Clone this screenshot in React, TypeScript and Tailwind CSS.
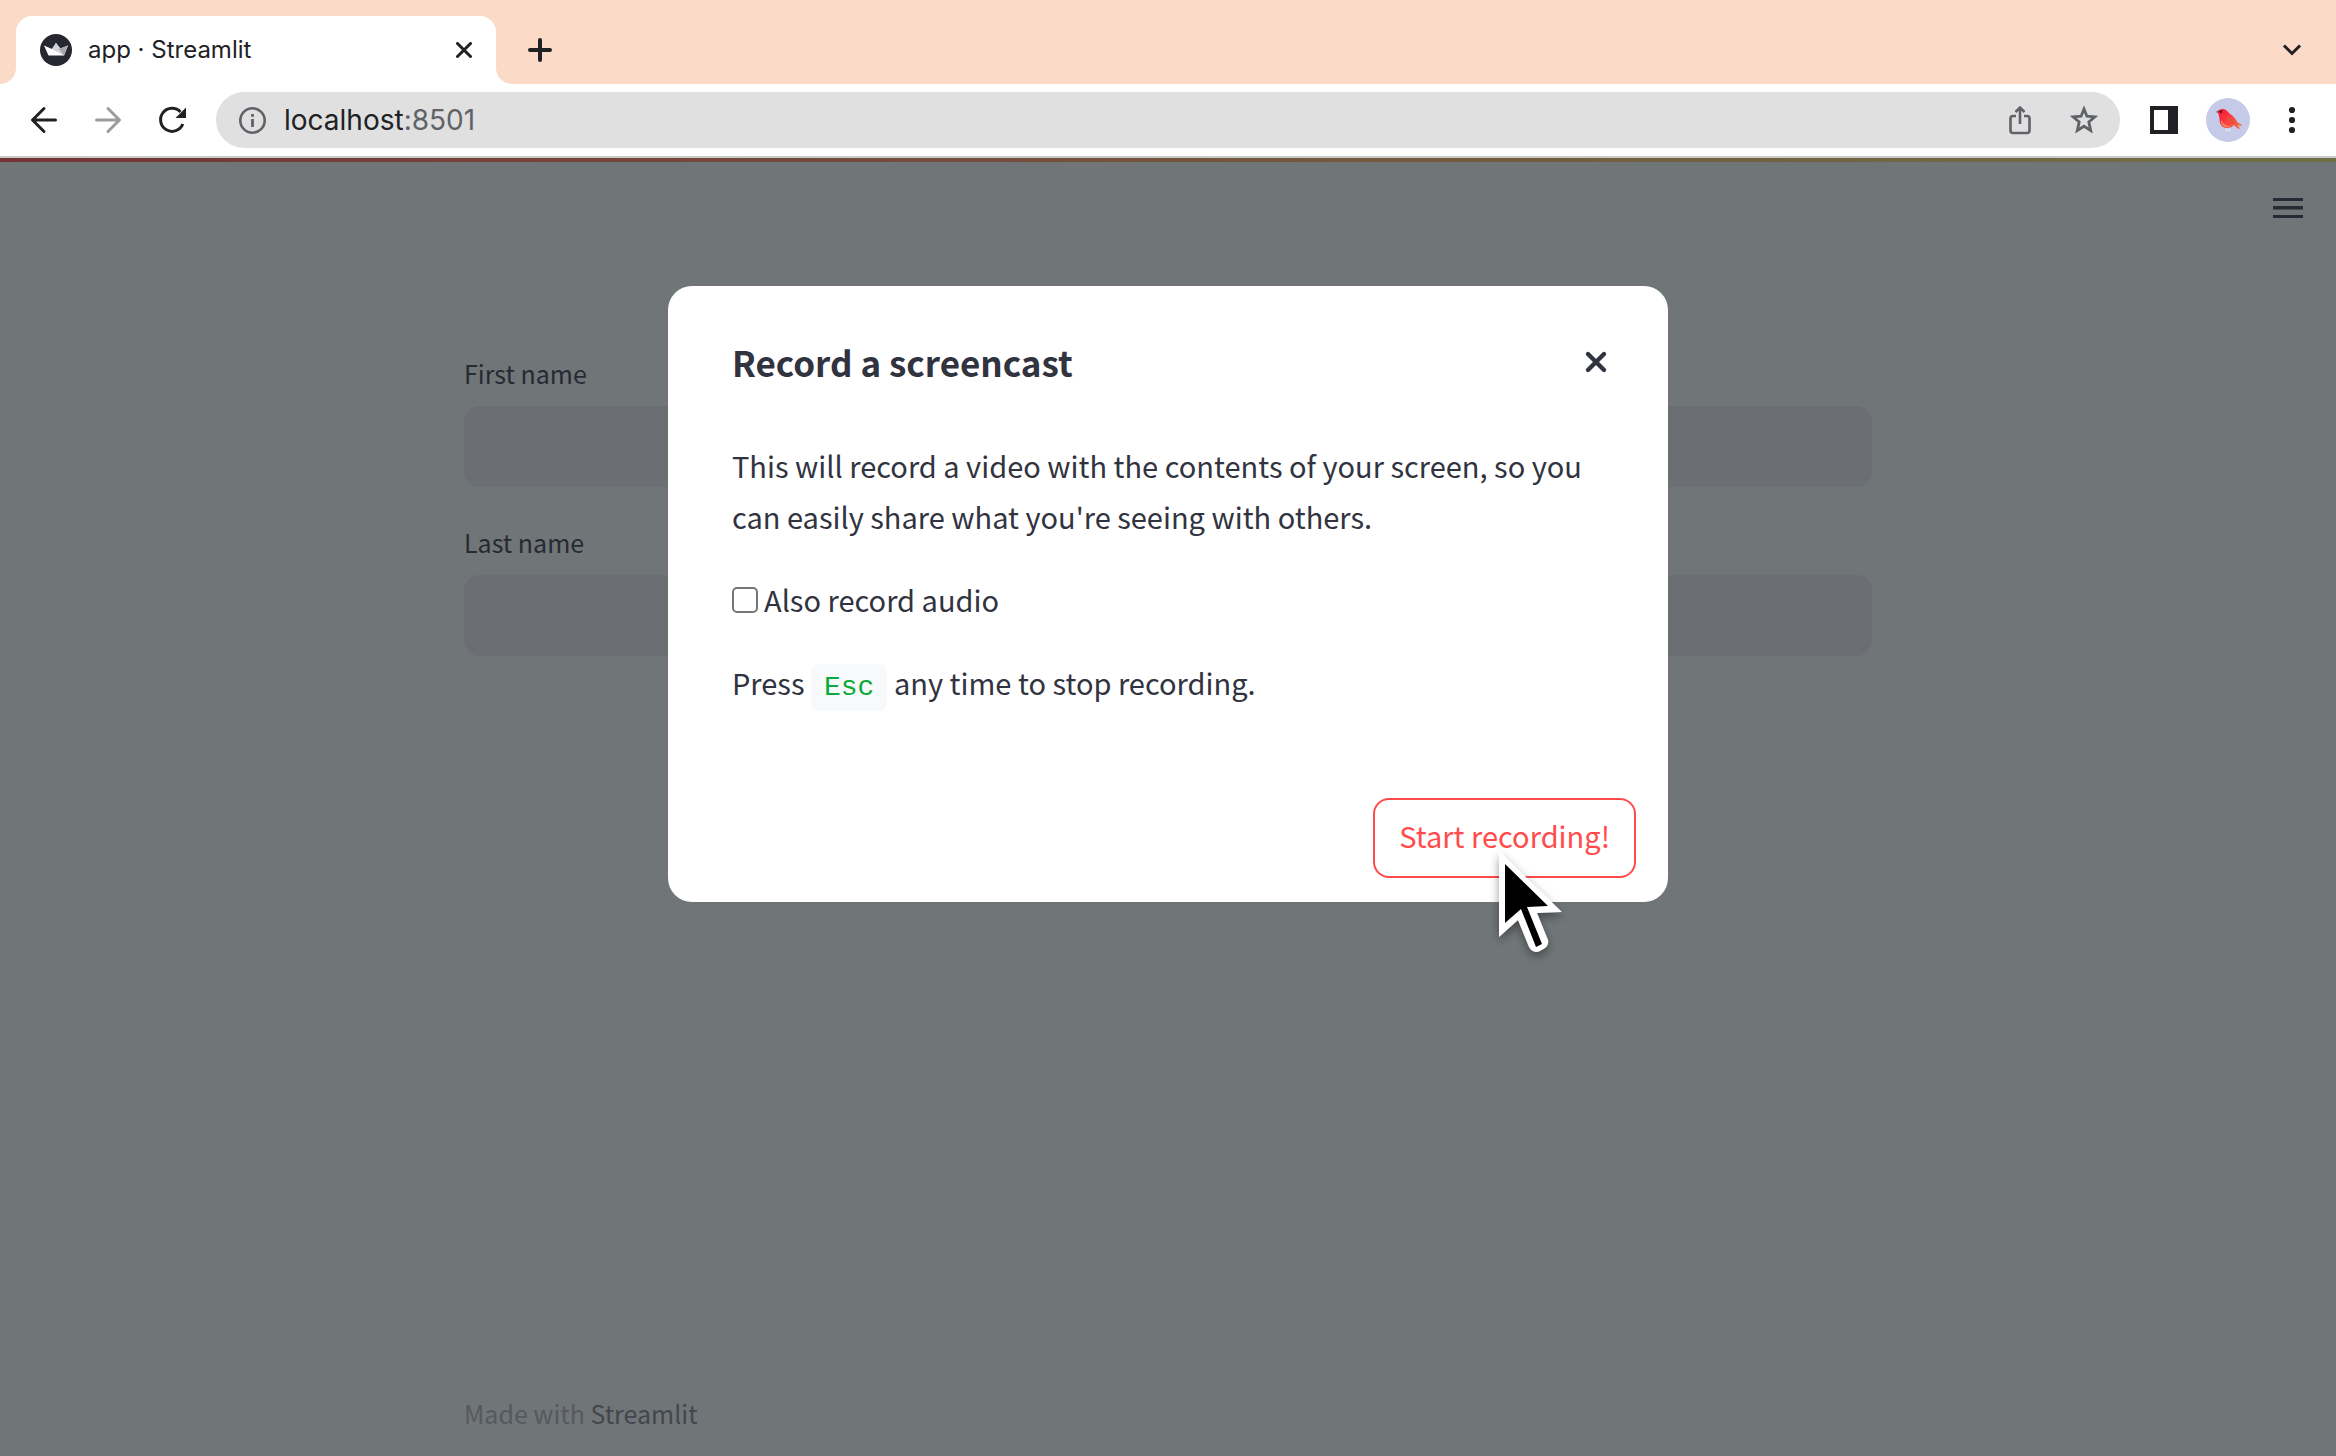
import React from "react";

function TabStrip() {
  return (
    <div className="flex h-[84px] items-end justify-between bg-[#fcdac8]">
      <div className="flex items-end">
        <div className="h-4 w-4 bg-white">
          <div className="h-4 w-4 rounded-br-2xl bg-[#fcdac8]" />
        </div>
        <div className="flex h-[68px] w-[480px] items-center rounded-t-2xl bg-white pr-6 pl-6">
          <svg className="h-8 w-8" viewBox="0 0 32 32" aria-hidden="true">
            <circle cx="16" cy="16" r="16" fill="#262730" />
            <path d="M4 11.500 L12 15 L16 9 L20.300 14.500 L28 11.500 L24 21.500 H8.500 Z" fill="#fff" />
            <path d="M16 9 L20.300 14.500 L24 21.500 L12 15 Z" fill="#d2d2d5" />
            <path d="M28 11.500 L24 21.500 L19 15 Z" fill="#a6a6ac" />
          </svg>
          <span className="flex-1 pl-4 text-2xl text-[#202124]">app · Streamlit</span>
          <button type="button" aria-label="Close tab" className="h-4 w-4">
            <svg className="h-4 w-4" viewBox="0 0 16 16" fill="none" stroke="#202124" strokeWidth="3" strokeLinecap="round">
              <path d="M1.500 1.500 14.500 14.500M14.500 1.500 1.500 14.500" />
            </svg>
          </button>
        </div>
        <div className="h-4 w-4 bg-white">
          <div className="h-4 w-4 rounded-bl-2xl bg-[#fcdac8]" />
        </div>
        <button type="button" aria-label="New tab" className="flex h-[68px] items-center pl-4">
          <svg className="h-6 w-6" viewBox="0 0 24 24" fill="none" stroke="#202124" strokeWidth="4" strokeLinecap="round">
            <path d="M12 2V22M2 12H22" />
          </svg>
        </button>
      </div>
      <button type="button" aria-label="Search tabs" className="flex h-[68px] items-center pr-8">
        <svg className="h-6 w-6" viewBox="0 0 24 24" fill="none" stroke="#202124" strokeWidth="3" strokeLinecap="square">
          <path d="M5 8.500 12 15.500 19 8.500" />
        </svg>
      </button>
    </div>
  );
}

function Bird() {
  return (
    <svg className="h-11 w-11" viewBox="0 0 44 44" aria-hidden="true">
      <defs>
        <linearGradient id="bird" x1="0" y1="0" x2="1" y2="1">
          <stop offset="0" stopColor="#f5102f" />
          <stop offset="0.5" stopColor="#fb3f45" />
          <stop offset="1" stopColor="#ef7a4a" />
        </linearGradient>
      </defs>
      <circle cx="22" cy="22" r="22" fill="#c5cae9" />
      <path d="M20.500 29v3M23.500 29v3M19.500 32.500h5" stroke="#e6e3ee" strokeWidth="1" fill="none" />
      <path d="M10 14 L12.800 12.300 L13 15.300 Z" fill="#5b4a4c" />
      <path d="M12 14 C12.500 11.500 15 10.800 17 11 C20 11.300 21.500 13.500 23.500 15.500 C27 18 30.500 21.500 31.500 24.500 L36 27 L35.500 28 L32 27 L34 30.500 L32.500 31 L27.500 27 C26.500 29.500 22 31 18 29.500 C14.500 28 13.500 24.500 13.500 21 C13.500 18.500 12.500 17 12 14 Z" fill="url(#bird)" />
      <path d="M21 18 C24 19 28 22 30 26 C26 26.500 21 24 21 18 Z" fill="#e8523c" />
      <path d="M15 22 C17 26 20 28 24 28.500 C20 30 14.500 28.500 15 22 Z" fill="#f58a5b" />
      <circle cx="15" cy="13.800" r="1.200" fill="#3a1218" />
    </svg>
  );
}

function Toolbar() {
  return (
    <div className="flex h-[74px] items-center border-b-2 border-[#c8cbc9] bg-white pr-8 pl-7">
      <div className="flex items-center gap-8">
        <button type="button" aria-label="Back" className="h-8 w-8">
          <svg className="h-8 w-8" viewBox="0 0 32 32" fill="none" stroke="#202124" strokeWidth="3" strokeLinecap="round" strokeLinejoin="round">
            <path d="M27.500 16H5M16 4.500 4.500 16 16 27.500" />
          </svg>
        </button>
        <button type="button" aria-label="Forward" className="h-8 w-8">
          <svg className="h-8 w-8" viewBox="0 0 32 32" fill="none" stroke="#9c9c9e" strokeWidth="3" strokeLinecap="round" strokeLinejoin="round">
            <path d="M4.500 16H27M16 4.500 27.500 16 16 27.500" />
          </svg>
        </button>
        <button type="button" aria-label="Reload" className="h-8 w-8">
          <svg className="h-8 w-8" viewBox="0 0 32 32" fill="none">
            <path d="M26.800 20 A11.500 11.500 0 1 1 24.500 8" stroke="#202124" strokeWidth="3" />
            <path d="M30 3.500V14H19.500Z" fill="#202124" />
          </svg>
        </button>
      </div>
      <div className="ml-7 flex h-14 flex-1 items-center rounded-full bg-[#e0e0e0] pr-5 pl-[22px]">
        <svg className="h-7 w-7" viewBox="0 0 28 28" fill="none" aria-hidden="true">
          <circle cx="14.500" cy="14.500" r="12.200" stroke="#5f6368" strokeWidth="2.600" />
          <path d="M14.500 13V21M14.500 8V10.800" stroke="#5f6368" strokeWidth="2.800" />
        </svg>
        <div className="flex-1 pl-[18px] text-[28px] leading-9 text-[#202124]">
          localhost<span className="text-[#5f6368]">:8501</span>
        </div>
        <button type="button" aria-label="Share" className="mr-8 h-8 w-8">
          <svg className="h-8 w-8" viewBox="0 0 32 32" fill="none" stroke="#5f6368" strokeWidth="2.600">
            <path d="M12 12H9A2.500 2.500 0 0 0 6.500 14.500V26.500A2.500 2.500 0 0 0 9 29H23A2.500 2.500 0 0 0 25.500 26.500V14.500A2.500 2.500 0 0 0 23 12H20M16 20V3.500M11.500 8 16 3.500 20.500 8" />
          </svg>
        </button>
        <button type="button" aria-label="Bookmark" className="h-8 w-8">
          <svg className="h-8 w-8" viewBox="0 0 32 32" fill="none" stroke="#5f6368" strokeWidth="2.800">
            <path d="M16 5 18.900 12.200 26.800 12.800 20.800 17.900 22.700 26.500 16 22.200 9.300 26.500 11.200 17.900 5.200 12.800 13.100 12.200Z" />
          </svg>
        </button>
      </div>
      <button type="button" aria-label="Side panel" className="ml-[30px] h-7 w-7">
        <svg className="h-7 w-7" viewBox="0 0 28 28">
          <path d="M0 0H28V28H0ZM4 4V24H18V4Z" fill="#202124" fillRule="evenodd" />
        </svg>
      </button>
      <button type="button" aria-label="Profile" className="ml-7 h-11 w-11">
        <Bird />
      </button>
      <button type="button" aria-label="Menu" className="ml-[30px] h-8 w-6">
        <svg className="h-8 w-6" viewBox="0 0 24 32" fill="#202124">
          <circle cx="12" cy="6" r="3.100" />
          <circle cx="12" cy="16" r="3.100" />
          <circle cx="12" cy="26" r="3.100" />
        </svg>
      </button>
    </div>
  );
}

function Field({ id, label }: { id: string; label: string }) {
  return (
    <div className="flex flex-col">
      <label htmlFor={id} className="text-[25px] leading-10 text-[#262a33]">
        {label}
      </label>
      <input id={id} type="text" className="mt-[13px] h-[81px] w-full rounded-2xl bg-[#6b6e73] px-6 text-[25px] outline-none" />
    </div>
  );
}

function Cursor() {
  return (
    <svg className="pointer-events-none absolute top-[53px] left-[113px] h-[120px] w-[90px] overflow-visible" viewBox="0 0 90 120" aria-hidden="true">
      <defs>
        <filter id="shadow" x="-40%" y="-30%" width="180%" height="180%">
          <feDropShadow dx="0" dy="4" stdDeviation="5" floodColor="#000" floodOpacity="0.4" />
        </filter>
      </defs>
      <path filter="url(#shadow)" fill="#fff" d="M13 0 76 61 51 62 62 89 Q63 94 59 97 L54 100 Q47 103 43 96 L32 69 13 86Z" />
      <path fill="#000" d="M19 13 62 55 41 56 56 93 50 96 35 58 19 72Z" />
    </svg>
  );
}

function RecordDialog() {
  return (
    <div role="dialog" aria-label="Record a screencast" className="w-[1000px] max-w-full rounded-3xl bg-white text-[#31333f]">
      <div className="flex items-center justify-between pt-[50px] pr-15 pl-16">
        <h2 className="text-[35px] leading-[52px] font-bold">Record a screencast</h2>
        <button type="button" aria-label="Close" className="h-6 w-6">
          <svg className="h-6 w-6" viewBox="0 0 24 24" fill="none" stroke="#31333f" strokeWidth="4.400" strokeLinecap="round">
            <path d="M4 4 20 20M20 4 4 20" />
          </svg>
        </button>
      </div>
      <div className="flex flex-col gap-8 px-16 pt-[52px] text-[29px] leading-[51px]">
        <p>This will record a video with the contents of your screen, so you can easily share what you're seeing with others.</p>
        <label className="flex items-center gap-[6px]">
          <input type="checkbox" className="h-[26px] w-[26px] appearance-none rounded-[5px] border-2 border-[#767676] bg-white" />
          Also record audio
        </label>
        <p>
          Press{" "}
          <code className="rounded-lg bg-[#f8f9fb] px-[13px] py-2 font-['Liberation_Mono',monospace] text-[28px] text-[#09ab3b]">Esc</code>{" "}
          any time to stop recording.
        </p>
      </div>
      <div className="flex justify-end px-8 pt-[85px] pb-6">
        <div className="relative">
          <button type="button" className="h-20 rounded-2xl border-2 border-[#ff4b4b] px-6 pb-1 text-[29px] text-[#ff4b4b]">
            Start recording!
          </button>
          <Cursor />
        </div>
      </div>
    </div>
  );
}

export default function App() {
  return (
    <div className="flex min-h-screen flex-col">
      <header className="font-['Inter',sans-serif]">
        <TabStrip />
        <Toolbar />
      </header>
      <div className="relative flex flex-1 flex-col bg-[#707577] font-['Noto_Sans_CJK_SC',sans-serif]">
        <div className="h-1 bg-linear-to-r from-[#743436] to-[#6f7045]" />
        <div className="flex justify-end px-8 pt-8">
          <button type="button" aria-label="Main menu" className="h-7 w-8">
            <svg className="h-7 w-8" viewBox="0 0 32 28" fill="#262a33">
              <path d="M1 4H31V7H1ZM1 12H31V15.500H1ZM1 21H31V24H1Z" />
            </svg>
          </button>
        </div>
        <main className="mx-auto flex w-full max-w-[1408px] flex-1 flex-col gap-[35px] pt-[131px]">
          <Field id="first-name" label="First name" />
          <Field id="last-name" label="Last name" />
        </main>
        <footer className="mx-auto w-full max-w-[1408px] pb-[23px] text-[25px] leading-10 text-[#565960]">
          Made with <a href="#" className="text-[#43464e]">Streamlit</a>
        </footer>
        <div className="absolute inset-0 flex items-start justify-center pt-32">
          <RecordDialog />
        </div>
      </div>
    </div>
  );
}
